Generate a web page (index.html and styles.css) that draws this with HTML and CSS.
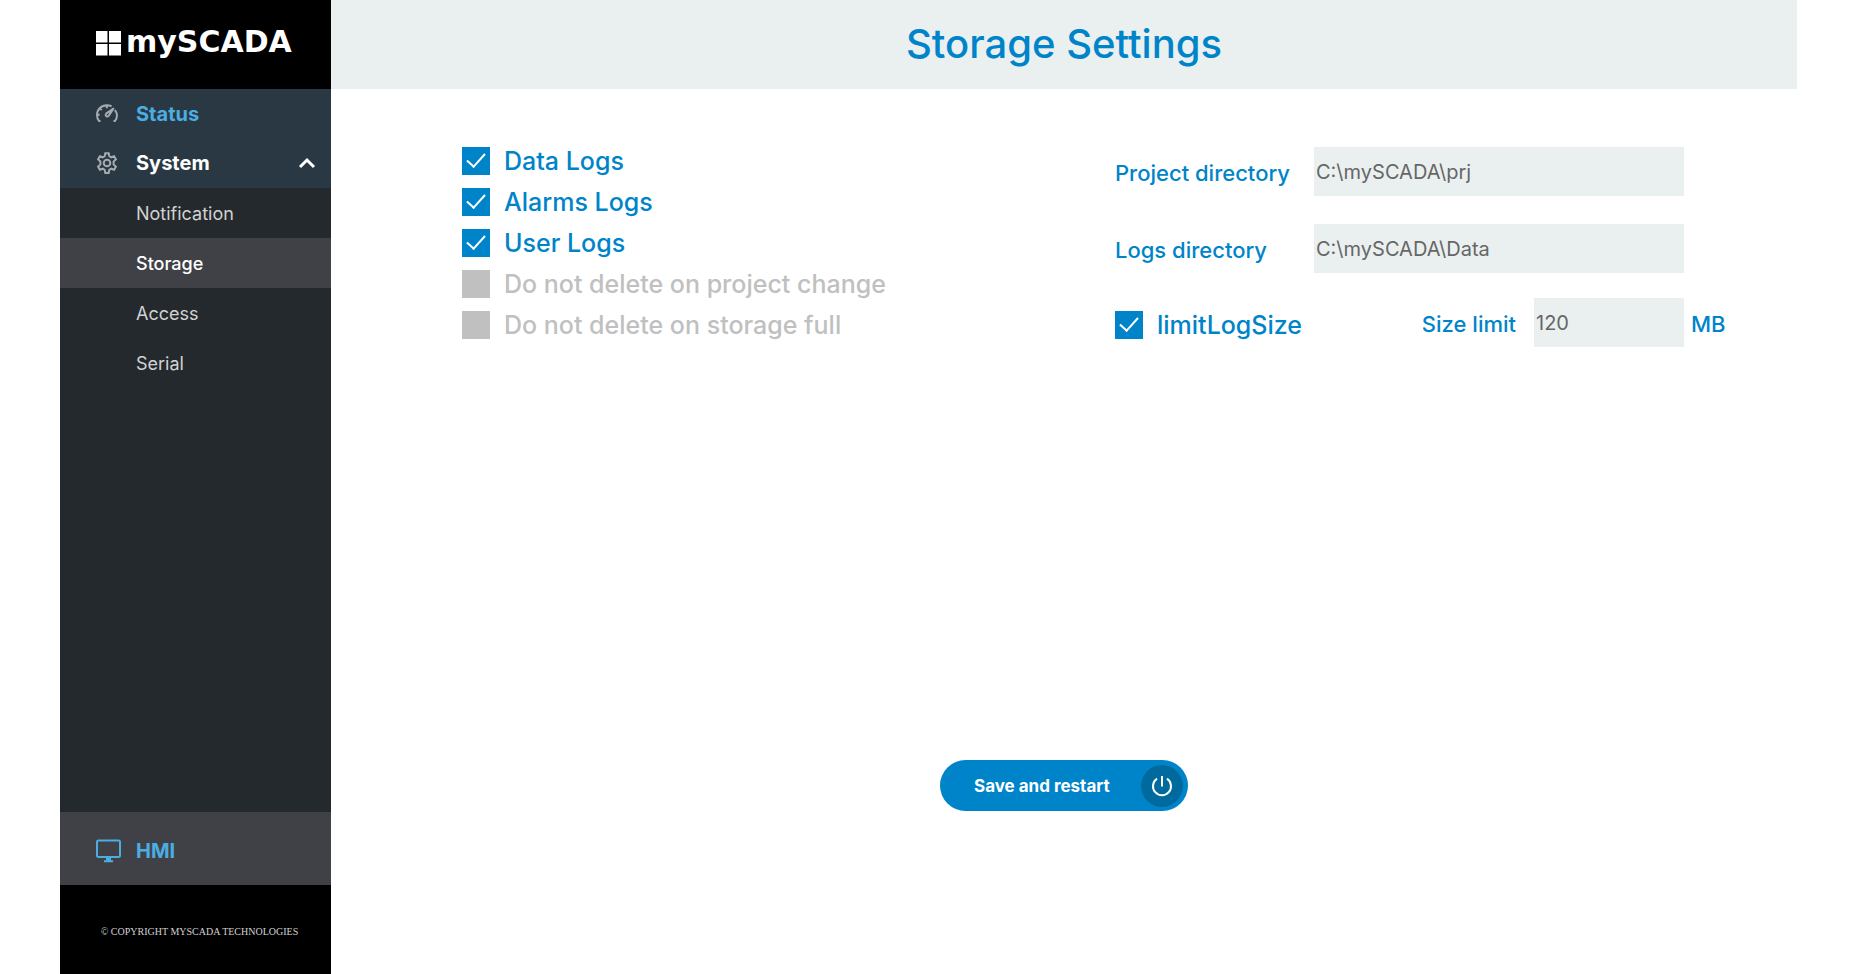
FILE: index.html
```html
<!DOCTYPE html>
<html lang="en">
<head>
<meta charset="utf-8">
<title>Storage Settings</title>
<link rel="stylesheet" href="styles.css">
</head>
<body>
<div class="app">
  <aside class="sidebar">
    <div class="brand">
      <svg class="brand-mark" viewBox="0 0 25 25" aria-hidden="true"><path d="M0 0h11.500v11.500H0zM13 0H25v11.500H13zM0 13h11.500V24.500H0zM13 13H25V24.500H13z"/></svg>
      <span class="brand-name">mySCADA</span>
    </div>
    <nav class="nav">
      <a class="nav-item status" href="#">
        <svg class="icon" viewBox="0 0 22 22" aria-hidden="true"><path d="M4.500 18H3C1.600 16.200 1 14.200 1 12 1 6.500 5.300 2.200 10.800 2.200c1.900 0 3.400.4 4.800 1.200M18.900 7.200C20.200 8.700 21 10.200 21 12.200c0 2.100-.7 4-2 5.800h-1.500M10.800 2.200v3M4 5.400l1.700 1.700M1 11.800h2.600M17.800 5.200l-7.600 5.400c-1.600 1.700.9 3.900 2.400 2.300z"/></svg>
        <span>Status</span>
      </a>
      <a class="nav-item" href="#">
        <svg class="icon" viewBox="0 0 22 22" aria-hidden="true"><path d="M9.300 1.200h3.400l.6 3 1.900 1.100 2.900-1 1.800 3-2.300 2.300v2.800l2.300 2.300-1.800 3-2.900-1-1.900 1.100-.6 3.100H9.300l-.6-3.100-1.900-1.100-2.900 1-1.800-3 2.300-2.300V9.600L2.100 7.300l1.800-3 2.900 1 1.900-1.100z"/><circle cx="11" cy="11" r="3.300"/></svg>
        <span>System</span>
        <svg class="chevron" viewBox="0 0 18 12" aria-hidden="true"><path d="M2 10l7-7 7 7"/></svg>
      </a>
    </nav>
    <nav class="subnav">
      <a class="sub-item" href="#">Notification</a>
      <a class="sub-item active" href="#">Storage</a>
      <a class="sub-item" href="#">Access</a>
      <a class="sub-item" href="#">Serial</a>
    </nav>
    <a class="hmi" href="#">
      <svg class="monitor" viewBox="0 0 25 24" aria-hidden="true"><rect x="1" y="1.500" width="23" height="16.500" rx="1.500"/><path d="M12.500 18v4M8 22.200h9"/><path class="neck" d="M12.500 18v4"/></svg>
      <span>HMI</span>
    </a>
    <footer class="copyright">© COPYRIGHT MYSCADA TECHNOLOGIES</footer>
  </aside>
  <main class="main">
    <header class="header"><h1 class="title">Storage Settings</h1></header>
    <form class="settings">
      <div class="columns">
        <div class="checks">
          <label class="check"><input class="box" type="checkbox" checked>Data Logs</label>
          <label class="check"><input class="box" type="checkbox" checked>Alarms Logs</label>
          <label class="check"><input class="box" type="checkbox" checked>User Logs</label>
          <label class="check off"><input class="box" type="checkbox">Do not delete on project change</label>
          <label class="check off"><input class="box" type="checkbox">Do not delete on storage full</label>
        </div>
        <div class="fields">
          <label class="label" for="project">Project directory</label>
          <input class="field" id="project" type="text" value="C:\mySCADA\prj">
          <label class="label second" for="logs">Logs directory</label>
          <input class="field second" id="logs" type="text" value="C:\mySCADA\Data">
          <div class="limit">
            <label class="check limit-check"><input class="box" type="checkbox" checked>limitLogSize</label>
            <label class="label size-label" for="size">Size limit</label>
            <input class="field size" id="size" type="text" value="120">
          </div>
          <span class="label unit">MB</span>
        </div>
      </div>
      <button class="save" type="button">
        <span class="save-text">Save and restart</span>
        <span class="power"><svg class="power-icon" viewBox="0 0 22 22" aria-hidden="true"><path d="M11 1v10.500M6 3.700a9 9 0 1 0 10 0"/></svg></span>
      </button>
    </form>
  </main>
</div>
</body>
</html>
```
FILE: styles.css
```css
* {
  box-sizing: border-box;
}

body {
  margin: 0;
  background: #fff;
  font-family: Inter, "Open Sans", sans-serif;
}

.app {
  display: flex;
  min-height: 100vh;
  margin: 0 55px 0 60px;
}

.sidebar {
  display: flex;
  flex-direction: column;
  flex: 0 0 271px;
  background: #24292d;
}

.brand {
  display: flex;
  align-items: center;
  gap: 5px;
  height: 89px;
  padding: 0 0 3px 36px;
  background: #000;
  color: #fff;
}

.brand-mark {
  width: 25px;
  height: 25px;
  fill: #fff;
}

.brand-name {
  padding-bottom: 2px;
  font: bold 30px/32px "DejaVu Sans", sans-serif;
}

.nav {
  background: #293843;
}

.nav-item {
  display: flex;
  align-items: center;
  height: 50px;
  padding: 0 15px 0 36px;
  color: #fff;
  font-size: 20px;
  font-weight: 700;
  text-decoration: none;
}

.nav-item.status {
  height: 49px;
  color: #4bade0;
}

.icon {
  width: 22px;
  height: 22px;
  margin-right: 18px;
  fill: none;
  stroke: #a5abaf;
  stroke-width: 2;
}

.chevron {
  width: 18px;
  height: 12px;
  margin-left: auto;
  fill: none;
  stroke: #fff;
  stroke-width: 3;
}

.sub-item {
  display: flex;
  align-items: center;
  height: 50px;
  padding-left: 76px;
  color: #d2d2d2;
  font-size: 18px;
  text-decoration: none;
}

.sub-item.active {
  background: #404146;
  color: #fff;
  font-weight: 500;
}

.hmi {
  display: flex;
  align-items: center;
  gap: 15px;
  height: 73px;
  margin-top: auto;
  padding: 4px 0 0 36px;
  background: #404146;
  color: #4bade0;
  font-size: 20px;
  font-weight: 700;
  text-decoration: none;
}

.monitor {
  width: 25px;
  height: 24px;
  fill: none;
  stroke: #4bade0;
  stroke-width: 2;
}

.neck {
  stroke-width: 5;
}

.copyright {
  display: flex;
  align-items: center;
  justify-content: center;
  height: 89px;
  padding: 3px 0 0 8px;
  background: #000;
  color: #d2d2d2;
  font: 10px "Liberation Serif", serif;
}

.main {
  display: flex;
  flex-direction: column;
  flex: 1;
}

.header {
  display: flex;
  align-items: center;
  justify-content: center;
  height: 89px;
  padding-bottom: 2px;
  background: #eaf0f0;
}

.title {
  margin: 0;
  color: #0084c9;
  font-size: 40px;
  font-weight: 500;
}

.settings {
  display: flex;
  flex-direction: column;
  align-items: center;
  justify-content: space-between;
  flex: 1;
  padding: 58px 72px 163px 131px;
}

.columns {
  display: flex;
  justify-content: space-between;
  align-self: stretch;
}

.checks {
  display: flex;
  flex-direction: column;
  gap: 13px;
}

.check {
  display: flex;
  align-items: center;
  gap: 14px;
  height: 28px;
  color: #0084c9;
  font-size: 25px;
  font-weight: 500;
}

.check.off {
  color: #c0c0c0;
}

.box {
  display: grid;
  place-items: center;
  appearance: none;
  width: 28px;
  height: 28px;
  margin: 0;
  background: #c0c0c0;
}

.box:checked {
  background: #0084c9;
}

.box:checked::before {
  content: "";
  width: 8px;
  height: 16px;
  margin-bottom: 6px;
  border: solid #fff;
  border-width: 0 2px 2px 0;
  transform: rotate(42deg);
}

.fields {
  display: grid;
  grid-template-columns: 199px 370px 41px;
  align-items: center;
}

.label {
  padding-top: 3px;
  color: #0084c9;
  font-size: 22px;
  font-weight: 500;
}

.field {
  width: 100%;
  height: 49px;
  padding: 0 2px;
  border: 0;
  background: #eaf0f0;
  color: #666;
  font: 20px Inter, "Open Sans", sans-serif;
}

.second {
  grid-row: 2;
  margin-top: 28px;
}

.limit {
  grid-column: 1 / 3;
  display: flex;
  align-items: center;
  margin-top: 25px;
}

.limit-check {
  margin-top: 5px;
}

.size-label {
  margin: 0 18px 0 auto;
}

.size {
  width: 150px;
}

.unit {
  margin-top: 25px;
  padding-left: 7px;
}

.save {
  display: flex;
  align-items: center;
  justify-content: space-between;
  width: 248px;
  height: 51px;
  margin-right: 59px;
  padding: 0 5px 0 34px;
  border: 0;
  border-radius: 26px;
  background: #0084c9;
  color: #fff;
  font: 700 17px Inter, "Open Sans", sans-serif;
}

.power {
  display: grid;
  place-items: center;
  width: 42px;
  height: 42px;
  border-radius: 50%;
  background: #006a9f;
}

.power-icon {
  width: 22px;
  height: 22px;
  fill: none;
  stroke: #fff;
  stroke-width: 2;
}
```
